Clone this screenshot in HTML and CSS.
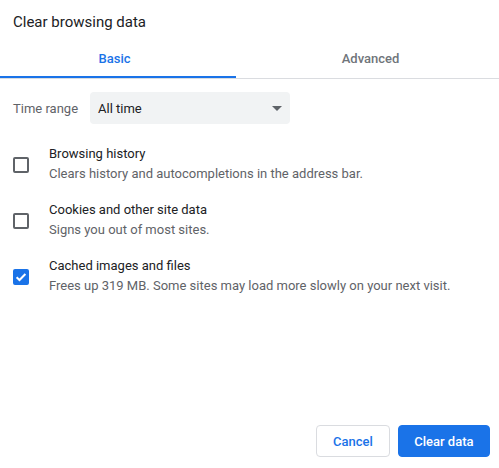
FILE: index.html
```html
<!DOCTYPE html>
<html>
<head>
<meta charset="utf-8">
<link rel="stylesheet" href="styles.css">
</head>
<body>
<div class="dialog">
  <div class="title">Clear browsing data</div>
  <div class="tabs">
    <div class="tab tab-basic active">Basic</div>
    <div class="tab tab-advanced">Advanced</div>
  </div>
  <div class="range-row">
    <span class="range-label">Time range</span>
    <div class="select">
      <span>All time</span>
      <svg class="arrow" width="10" height="5" viewBox="0 0 10 5"><path d="M0 0h10L5 5z" fill="#5f6368"/></svg>
    </div>
  </div>
  <div class="options">
    <div class="option">
      <span class="checkbox"></span>
      <div class="texts">
        <div class="label">Browsing history</div>
        <div class="sub">Clears history and autocompletions in the address bar.</div>
      </div>
    </div>
    <div class="option">
      <span class="checkbox"></span>
      <div class="texts">
        <div class="label">Cookies and other site data</div>
        <div class="sub">Signs you out of most sites.</div>
      </div>
    </div>
    <div class="option">
      <span class="checkbox checked">
        <svg width="16" height="16" viewBox="0 0 16 16"><path d="M3.6 8.2l2.9 2.8 5.9-6" fill="none" stroke="#fff" stroke-width="2"/></svg>
      </span>
      <div class="texts">
        <div class="label">Cached images and files</div>
        <div class="sub">Frees up 319 MB. Some sites may load more slowly on your next visit.</div>
      </div>
    </div>
  </div>
  <div class="footer">
    <button class="btn btn-cancel">Cancel</button>
    <button class="btn btn-primary">Clear data</button>
  </div>
</div>
</body>
</html>
```
FILE: styles.css
```css
* { box-sizing: border-box; }
html, body { margin: 0; padding: 0; background: #fff; }
body {
  font-family: Roboto, "Liberation Sans", sans-serif;
  font-size: 13px;
  color: #202124;
}
.dialog {
  height: 468px;
  display: flex;
  flex-direction: column;
}
.title {
  padding: 12px 13px 0;
  font-size: 15px;
  line-height: 20px;
  height: 40px;
  color: #202124;
}
.tabs {
  display: flex;
  border-bottom: 1px solid #dadce0;
}
.tab {
  height: 38px;
  line-height: 38px;
  font-weight: 500;
  text-align: center;
  color: #70757a;
}
.tab-basic { width: 236px; padding-right: 7px; }
.tab-advanced { flex: 1; padding-left: 6px; }
.tab.active {
  color: #1a73e8;
  box-shadow: inset 0 -2px 0 #1a73e8;
}
.range-row {
  display: flex;
  align-items: center;
  margin-top: 13px;
  padding-left: 13px;
}
.range-label {
  flex: 0 0 77px;
  white-space: nowrap;
  color: #5f6368;
}
.select {
  width: 200px;
  height: 32px;
  border-radius: 4px;
  background: #f1f3f4;
  display: flex;
  align-items: center;
  justify-content: space-between;
  padding: 0 8px 0 8px;
  color: #202124;
}
.arrow { display: block; }
.options {
  margin-top: 12px;
}
.option {
  display: flex;
  align-items: center;
  padding: 8px 0 8px 13px;
}
.checkbox {
  flex: 0 0 16px;
  width: 16px;
  height: 16px;
  border: 2px solid #5f6368;
  border-radius: 2px;
  margin-right: 20px;
  margin-top: 1px;
  position: relative;
}
.checkbox.checked {
  background: #1a73e8;
  border-color: #1a73e8;
}
.checkbox.checked svg {
  position: absolute;
  left: -2px;
  top: -2px;
}
.texts { line-height: 20px; }
.label { color: #202124; }
.sub { color: #5f6368; }
.footer {
  margin-top: auto;
  display: flex;
  justify-content: flex-end;
  gap: 8px;
  padding: 0 9px 11px 0;
}
.btn {
  font-family: Roboto, "Liberation Sans", sans-serif;
  font-size: 13px;
  font-weight: 500;
  height: 32px;
  border-radius: 4px;
  cursor: pointer;
}
.btn-cancel {
  padding: 0 16px;
  background: #fff;
  color: #1a73e8;
  border: 1px solid #dadce0;
}
.btn-primary {
  padding: 0 15.5px;
  background: #1a73e8;
  color: #fff;
  border: 1px solid #1a73e8;
}
```
